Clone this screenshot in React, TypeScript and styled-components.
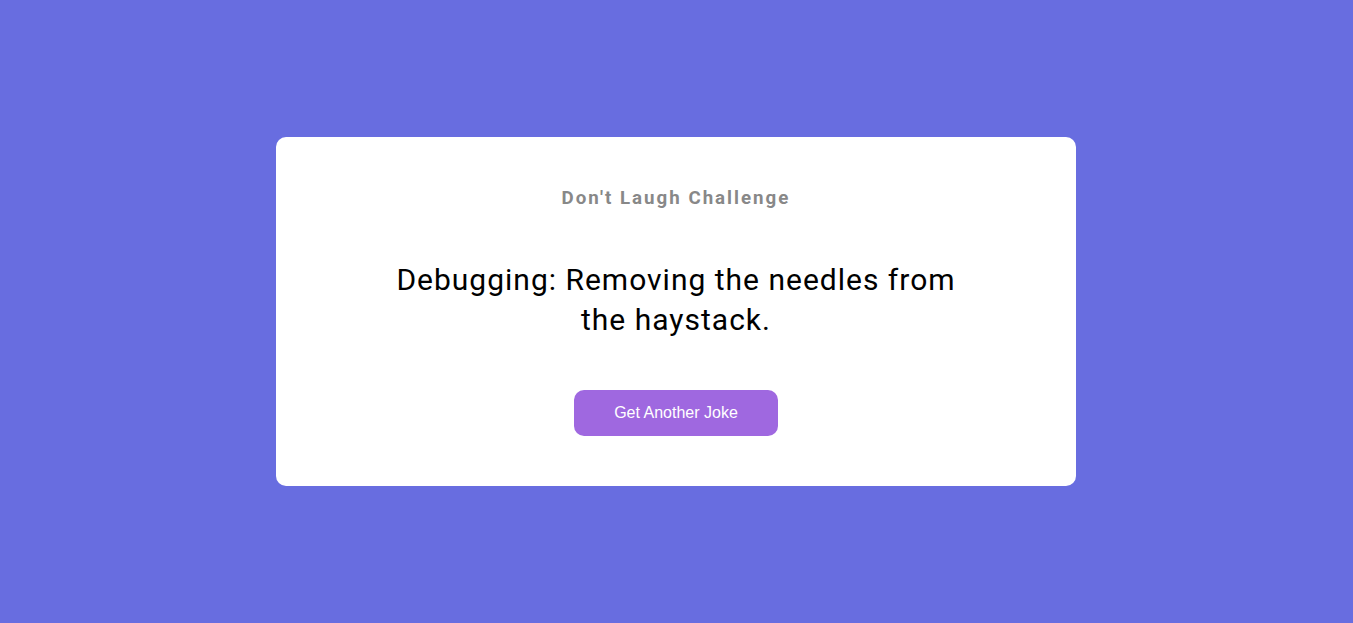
import React from "react";
import styled, { createGlobalStyle } from "styled-components";

const Global = createGlobalStyle`
  * { box-sizing: border-box; }
  html, body { margin: 0; padding: 0; }
  body { background: #686de0; font-family: Roboto, "Noto Sans", sans-serif; }
`;

const Page = styled.div`
  min-height: 623px;
  padding-right: 1px;
  display: flex;
  align-items: center;
  justify-content: center;
`;

const Card = styled.div`
  width: 800px;
  background: #ffffff;
  border-radius: 10px;
  padding: 50px 100px;
  display: flex;
  flex-direction: column;
  align-items: center;
  text-align: center;
`;

const Title = styled.h3`
  margin: 0 0 51px;
  font-family: Roboto, sans-serif;
  font-size: 18.72px;
  line-height: 22px;
  font-weight: 700;
  letter-spacing: 2px;
  color: #888888;
`;

const Joke = styled.div`
  font-family: Roboto, sans-serif;
  font-size: 30px;
  line-height: 40px;
  letter-spacing: 1px;
  color: #000000;
  margin-bottom: 50px;
  width: 600px;
`;

const Button = styled.button`
  background: #9f68e0;
  color: #ffffff;
  border: none;
  border-radius: 10px;
  width: 204px;
  height: 46px;
  font-family: "Liberation Sans", Arial, sans-serif;
  font-size: 16px;
  cursor: pointer;
`;

export default function App() {
  return (
    <Page>
      <Global />
      <Card>
        <Title>Don't Laugh Challenge</Title>
        <Joke>Debugging: Removing the needles from the haystack.</Joke>
        <Button>Get Another Joke</Button>
      </Card>
    </Page>
  );
}
